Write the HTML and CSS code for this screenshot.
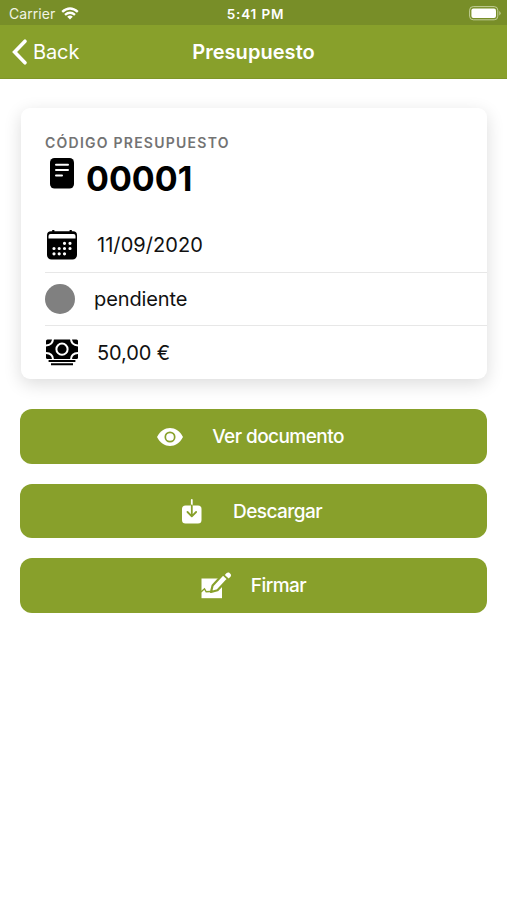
FILE: index.html
```html
<!DOCTYPE html>
<html lang="es">
<head>
<meta charset="utf-8">
<title>Presupuesto</title>
<link rel="stylesheet" href="styles.css">
</head>
<body>
<header class="header">
  <div class="status">
    <div class="carrier"><span>Carrier</span>
      <svg class="wifi" width="18" height="13" viewBox="0 0 18 13" fill="none" stroke="#fff" stroke-width="2.4"><path d="M1.200 4.800Q9-2 16.800 4.800M4 7.900Q9 3.700 14 7.900"/><path d="M9 12.500 6.200 9.700Q9 7.500 11.800 9.700Z" fill="#fff" stroke="none"/></svg>
    </div>
    <span class="clock">5:41 PM</span>
    <svg class="battery" width="33" height="15" viewBox="0 0 33 15"><rect x=".6" y=".6" width="28.2" height="13.2" rx="3.6" fill="none" stroke="#c3cf99" stroke-width="1"/><rect x="2.4" y="2.4" width="24.6" height="9.6" rx="2" fill="#fff"/><path d="M30.2 5v4.4Q31.7 8.7 31.7 7.2T30.2 5Z" fill="#b6c486"/></svg>
  </div>
  <nav class="nav">
    <a class="back"><svg width="17" height="28" viewBox="0 0 17 28"><path d="M14 3.200 3.600 14 14 24.800" fill="none" stroke="#fff" stroke-width="3.600" stroke-linecap="round" stroke-linejoin="miter"/></svg><span>Back</span></a>
    <h1 class="title">Presupuesto</h1>
  </nav>
</header>
<main class="content">
  <section class="card">
    <div class="card-head">
      <div class="label">CÓDIGO PRESUPUESTO</div>
      <div class="code">
        <svg width="24" height="31" viewBox="0 0 24 31"><rect width="24" height="30.5" rx="4.5"/><path d="M6 6.700h12M6 12.100h12M6 17.500h6" stroke="#fff" stroke-width="2" stroke-linecap="round"/></svg>
        <strong>00001</strong>
      </div>
    </div>
    <div class="row">
      <svg class="row-icon calendar" width="30" height="30" viewBox="0 0 30 30"><path d="M4 1.200h22a4 4 0 0 1 4 4V25a4.500 4.500 0 0 1-4.500 4.500h-21A4.500 4.500 0 0 1 0 25V5.200a4 4 0 0 1 4-4Z"/><path d="M5.200 0h2.200v3H5.200zM22.600 0h2.200v3h-2.200z"/><path d="M3.500 3.900h23a2 2 0 0 1 2 2V8.500h-27V5.900a2 2 0 0 1 2-2Z" fill="#fff"/><g stroke="#fff" stroke-width="3.200" stroke-linecap="round"><path d="M17.500 13.300h0M23 13.300h0M7 18.500h0M12.200 18.500h0M17.500 18.500h0M23 18.500h0M7 23.800h0M12.200 23.800h0M17.500 23.800h0"/></g></svg>
      <span class="date">11/09/2020</span>
    </div>
    <div class="row">
      <span class="dot"></span>
      <span class="state">pendiente</span>
    </div>
    <div class="row last">
      <svg class="row-icon cash" width="32" height="27" viewBox="0 0 32 27"><rect y=".5" width="32" height="19.500" rx="1.500"/><g fill="none" stroke="#fff" stroke-width="2"><circle cx="16" cy="10.200" r="5.600"/><path d="M7 0Q6.700 6.200 0 6.500M25 0Q25.300 6.200 32 6.500M0 14Q6.700 14.300 7 20.200M32 14Q25.300 14.300 25 20.200"/></g><path d="M2.600 21h26.800v2H2.600zM5 24.300h22v2H5z"/></svg>
      <span class="amount">50,00 €</span>
    </div>
  </section>
  <button class="btn view">
    <svg width="28" height="20" viewBox="0 0 28 20"><path d="M1 10C7-2 21-2 27 10 21 22 7 22 1 10Z" fill="#fff"/><circle cx="14" cy="10" r="4.700" fill="none" stroke="#88a02b" stroke-width="1.700"/></svg>
    <span>Ver documento</span>
  </button>
  <button class="btn download">
    <svg width="20" height="25" viewBox="0 0 20 25"><rect y="6.500" width="19.500" height="18" rx="3.500" fill="#fff"/><path d="M9.800 1v7" stroke="#fff" stroke-width="1.800" stroke-linecap="round"/><path d="M9.800 6.500v10.500M5.500 13l4.300 4.300 4.300-4.300" fill="none" stroke="#88a02b" stroke-width="1.800" stroke-linecap="round" stroke-linejoin="round"/></svg>
    <span>Descargar</span>
  </button>
  <button class="btn sign">
    <svg width="31" height="27" viewBox="0 0 31 27"><path d="M.5 6.500h20.500V26.200H.5Z" fill="#fff"/><path d="M0 20 3.500 16.800 5.200 19.800 9.500 19.500" fill="none" stroke="#88a02b" stroke-width="1.400"/><path d="m10 20 1.600-6.600L22 2.300 27 7 16.500 18.300Z" fill="#fff" stroke="#88a02b" stroke-width="2.200" stroke-linejoin="round"/><path d="m23.800 3 1.800-1.900Q26.700 0 28 .6l1.600 1.500q1 1.400-.1 2.600L27.700 6.600Z" fill="#fff"/></svg>
    <span>Firmar</span>
  </button>
</main>
</body>
</html>
```
FILE: styles.css
```css
* { box-sizing: border-box; }
body { margin: 0; background: #fff; font-family: Inter, "Liberation Sans", sans-serif; color: #111; }
svg { display: block; flex: none; }
.header { height: 79px; background: #88a02b; color: #fff; border-bottom: 1px solid #7f9628; }
.status { height: 25px; background: #788e28; display: grid; grid-template-columns: 1fr auto 1fr; align-items: center; padding: 2px 5px 0 9px; }
.carrier { display: flex; align-items: center; gap: 6px; font-size: 14px; letter-spacing: .05px; color: #f1f4e5; }
.clock { font-size: 13.5px; font-weight: 600; letter-spacing: .85px; }
.battery { justify-self: end; }
.nav { height: 53px; display: grid; grid-template-columns: 1fr auto 1fr; align-items: center; padding: 0 11px; }
.back { display: flex; align-items: center; gap: 5px; font-size: 20px; letter-spacing: -.1px; }
.title { margin: 0; font-size: 20px; font-weight: 600; letter-spacing: .05px; }
.content { padding: 29px 20px 0; }
.card { height: 271px; margin: 0 0 30px 1px; border-radius: 9px; background: #fff; box-shadow: 0 5px 18px rgba(0,0,0,.14); }
.card-head { height: 110px; padding: 26px 24px 0; }
.label { font-size: 14px; line-height: 17px; font-weight: 600; letter-spacing: 1.24px; color: #737373; }
.code { display: flex; align-items: flex-start; gap: 12px; padding: 7px 0 0 5px; }
.code strong { font-size: 34px; line-height: 42px; letter-spacing: 0; color: #000; }
.row { height: 53.500px; margin-left: 24px; display: flex; align-items: center; font-size: 20px; }
.row + .row { border-top: 1px solid #e7e7e7; }
.last { padding-top: 1px; }
.calendar { margin: 0 20px 0 2px; }
.cash { margin: 0 19px 0 1px; }
.dot { width: 30px; height: 30px; border-radius: 50%; background: #808080; margin-right: 19px; }
.date { letter-spacing: .05px; }
.state, .amount { letter-spacing: -.1px; }
.btn { width: 467px; height: 54.500px; margin: 0 0 20px; padding: 0; border: 0; border-radius: 12px; background: #88a02b; color: #fff; display: flex; align-items: center; justify-content: center; font: 500 19px Inter, "Liberation Sans", sans-serif; letter-spacing: -.55px; gap: 28px; }
.view { padding: 1px 7px 0 0; }
.download { gap: 31px; padding: 1px 3px 0 0; }
.sign { gap: 19px; }
```
